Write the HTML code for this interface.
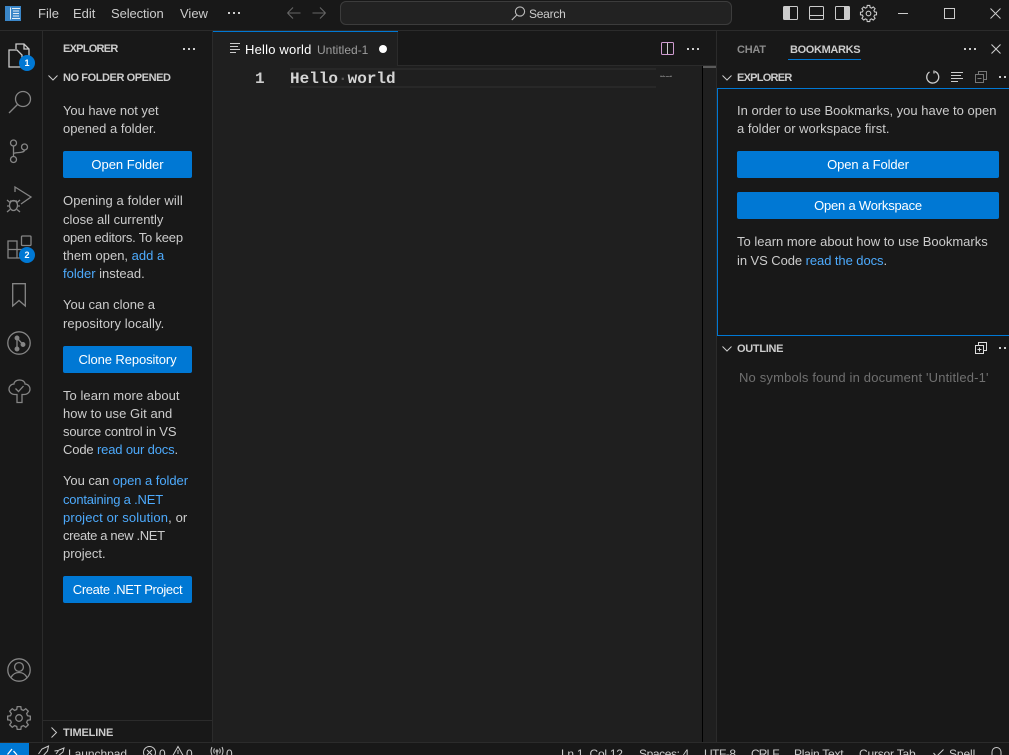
<!DOCTYPE html>
<html><head><meta charset="utf-8">
<style>
html,body{margin:0;padding:0;width:1009px;height:755px;overflow:hidden;background:#181818}
body{position:relative;font:13px "Liberation Sans",sans-serif;color:#ccc}
.r{position:absolute}
.t{position:absolute;white-space:nowrap;line-height:18px}
.h{font-size:11px;font-weight:bold;color:#ccc}
.b{position:absolute;background:#0078d4;color:#fff;text-align:center;height:27px;line-height:27px;border-radius:2px;white-space:nowrap}
a{color:#4daafc;text-decoration:none}
svg{position:absolute;overflow:visible;fill:none}
.s{font-size:12px;color:#ccc;top:745px}
.badge{position:absolute;width:16px;height:16px;border-radius:8px;background:#0078d4;color:#fff;font-size:9px;font-weight:bold;line-height:16px;text-align:center}
.dots{position:absolute;display:flex;gap:3px}
.dots i{display:block;width:2px;height:2px;background:#ccc}
</style></head><body>
<!-- structure -->
<div class="r" style="left:0;top:30px;width:1009px;height:1px;background:#2b2b2b"></div>
<div class="r" style="left:42px;top:31px;width:1px;height:712px;background:#2b2b2b"></div>
<div class="r" style="left:212px;top:31px;width:1px;height:712px;background:#2b2b2b"></div>
<div class="r" style="left:213px;top:31px;width:503px;height:712px;background:#1f1f1f"></div>
<div class="r" style="left:213px;top:31px;width:503px;height:35px;background:#181818"></div>
<div class="r" style="left:213px;top:65px;width:503px;height:1px;background:#2b2b2b"></div>
<div class="r" style="left:213px;top:31px;width:185px;height:35px;background:#1f1f1f"></div>
<div class="r" style="left:213px;top:31px;width:185px;height:1px;background:#0078d4"></div>
<div class="r" style="left:397px;top:32px;width:1px;height:34px;background:#2b2b2b"></div>
<div class="r" style="left:716px;top:31px;width:1px;height:712px;background:#2b2b2b"></div>
<div class="r" style="left:717px;top:31px;width:292px;height:712px;background:#181818"></div>
<div class="r" style="left:0;top:742px;width:1009px;height:1px;background:#2b2b2b"></div>
<div class="r" style="left:0;top:743px;width:1009px;height:12px;background:#181818"></div>
<div class="r" style="left:43px;top:720px;width:169px;height:1px;background:#2b2b2b"></div>
<!-- current line and editor scrollbar -->
<div class="r" style="left:290px;top:68px;width:366px;height:20px;box-sizing:border-box;border:solid #282828;border-width:2px 0;"></div>
<div class="r" style="left:702px;top:66px;width:1px;height:676px;background:#000"></div>
<div class="r" style="left:703px;top:66px;width:13px;height:2px;background:#5a5a5a"></div>

<!-- title bar -->
<div class="r" style="left:5px;top:6px;width:16px;height:15px;background:#3a86c8"></div>
<svg style="left:5px;top:6px" width="16" height="15" stroke="#e4eef6" stroke-width="1"><path d="M5.5 1.5V13.5M7 2.5H15M8 5H14M8 7.5H14M8 10H14M7 12.5H15"/></svg>
<div class="t" style="left:38px;top:5px;color:#ccc">File</div>
<div class="t" style="left:73px;top:5px">Edit</div>
<div class="t" style="left:111px;top:5px;letter-spacing:-.1px">Selection</div>
<div class="t" style="left:180px;top:5px">View</div>
<div class="dots" style="left:228px;top:12px"><i></i><i></i><i></i></div>
<svg style="left:287px;top:6px" width="14" height="14" stroke="#666" stroke-width="1.1"><path d="M.5 7H13.500M.5 7L6 1.500M.5 7L6 12.500"/></svg>
<svg style="left:312px;top:6px" width="14" height="14" stroke="#666" stroke-width="1.1"><path d="M.5 7H13.500M13.500 7L8 1.500M13.500 7L8 12.500"/></svg>
<div class="r" style="left:340px;top:1px;width:390px;height:22px;box-sizing:content-box;border:1px solid #3c3c3c;border-radius:6px;background:#222"></div>
<svg style="left:511px;top:6px" width="15" height="15" stroke="#bbb" stroke-width="1.1"><circle cx="9" cy="5.500" r="4.600"/><path d="M5.800 9L.8 14"/></svg>
<div class="t" style="left:529px;top:5px;font-size:12px;color:#ccc;letter-spacing:-.25px">Search</div>
<svg style="left:782px;top:5px" width="16" height="16" stroke="#ccc"><rect x="1.5" y="1.5" width="14" height="13" rx="1"/><rect x="2" y="2" width="6" height="12" fill="#ccc" stroke="none"/></svg>
<svg style="left:808px;top:5px" width="16" height="16" stroke="#ccc"><rect x="1.5" y="1.5" width="14" height="13" rx="1"/><path d="M2 10.5H15"/></svg>
<svg style="left:834px;top:5px" width="16" height="16" stroke="#ccc"><rect x="1.5" y="1.5" width="14" height="13" rx="1"/><rect x="10" y="2" width="5" height="12" fill="#ccc" stroke="none"/></svg>
<svg style="left:860px;top:5px" width="17" height="17" stroke="#ccc" stroke-width="1.500" viewBox="0 0 24 24"><circle cx="12" cy="12" r="3.300"/><path transform="translate(12 12)" d="M-2.280-8.500L-1.800-11.360H1.800L2.280-8.500 4.400-7.620 6.760-9.300 9.300-6.760 7.620-4.400 8.500-2.280 11.360-1.800V1.800L8.500 2.280 7.620 4.400 9.300 6.760 6.760 9.300 4.400 7.620 2.280 8.500 1.800 11.360H-1.800L-2.280 8.500-4.400 7.620-6.760 9.300-9.300 6.760-7.620 4.400-8.500 2.280-11.360 1.800V-1.800L-8.500-2.280-7.620-4.400-9.300-6.760-6.760-9.300-4.400-7.620Z"/></svg>
<div class="r" style="left:898px;top:13px;width:10px;height:1px;background:#ccc"></div>
<div class="r" style="left:944px;top:8px;width:9px;height:9px;border:1px solid #ccc"></div>
<svg style="left:990px;top:8px" width="11" height="11" stroke="#ccc"><path d="M.5 .5L10.5 10.5M10.5 .5L.5 10.5"/></svg>

<!-- activity bar -->
<svg style="left:8px;top:43px" width="24" height="24" stroke="#ccc" stroke-width="1.3"><path d="M8 6V1H16L21 6V17H14M16 1V6H21"/><path d="M1 7H9L14 12V24H1Z"/></svg>
<div class="badge" style="left:19px;top:55px">1</div>
<svg style="left:8px;top:90px" width="24" height="26" stroke="#858585" stroke-width="1.3"><circle cx="15" cy="9" r="7.5"/><path d="M9.5 14.5L1 23"/></svg>
<svg style="left:8px;top:138px" width="24" height="26" stroke="#858585" stroke-width="1.3"><circle cx="5.500" cy="5" r="3"/><circle cx="5.500" cy="21.500" r="3"/><circle cx="16.500" cy="9" r="3"/><path d="M5.500 8V18.500M16.500 12C16.500 15.500 8 14 5.500 15.500"/></svg>
<svg style="left:6px;top:186px" width="26" height="28" stroke="#858585" stroke-width="1.3"><path d="M9 6L9 1 25 11 15 18"/><ellipse cx="7.500" cy="19.500" rx="4" ry="5"/><path d="M1 14L4 16.500M14 14L11 16.500M1 20H3.500M11.500 20H14M1 26L4 23.500M14 26L11 23.500M4 15H11"/></svg>
<svg style="left:7px;top:235px" width="26" height="26" stroke="#858585" stroke-width="1.3"><rect x="14.5" y="1" width="9.5" height="9.5" rx="1"/><path d="M1 6H10V23H1ZM1 14.5H18V23H10M10 6V14.500"/></svg>
<div class="badge" style="left:19px;top:247px">2</div>
<svg style="left:12px;top:283px" width="14" height="24" stroke="#858585" stroke-width="1.3"><path d="M.7 .7H13.300V23L7 17.500 .7 23Z"/></svg>
<svg style="left:7px;top:331px" width="24" height="24" stroke="#858585" stroke-width="1.3"><circle cx="12" cy="12" r="11.2"/><circle cx="10" cy="7" r="1.8" fill="#858585"/><circle cx="10" cy="18" r="1.8" fill="#858585"/><circle cx="16" cy="13.5" r="1.8" fill="#858585"/><path d="M10 7V18M10 7L16 13.5"/></svg>
<svg style="left:8px;top:379px" width="23" height="25" stroke="#858585" stroke-width="1.3"><path d="M11.5 1C8 1 6 3 6 5 3 5 1 7.5 1 10 1 13.5 4 15.5 7 15.5H9V23.5H14V15.5H16C19 15.5 22 13.5 22 10 22 7.5 20 5 17 5 17 3 15 1 11.5 1Z"/><path d="M7.5 9.5L10.5 12.5 15.5 7"/></svg>
<svg style="left:7px;top:658px" width="24" height="24" stroke="#858585" stroke-width="1.3"><circle cx="12" cy="12" r="11.2"/><circle cx="12" cy="9" r="4.4"/><path d="M4 19.5C6 15.5 9 14.5 12 14.5S18 15.5 20 19.5"/></svg>
<svg style="left:7px;top:706px" width="24" height="24" stroke="#858585" stroke-width="1.3"><circle cx="12" cy="12" r="3.300"/><path transform="translate(12 12)" d="M-2.280-8.500L-1.800-11.360H1.800L2.280-8.500 4.400-7.620 6.760-9.300 9.300-6.760 7.620-4.400 8.500-2.280 11.360-1.800V1.800L8.500 2.280 7.620 4.400 9.300 6.760 6.760 9.300 4.400 7.620 2.280 8.500 1.800 11.360H-1.800L-2.280 8.500-4.400 7.620-6.760 9.300-9.300 6.760-7.620 4.400-8.500 2.280-11.360 1.800V-1.800L-8.500-2.280-7.620-4.400-9.300-6.760-6.760-9.300-4.400-7.620Z"/></svg>

<!-- left sidebar -->
<div class="t h" style="left:63px;top:40px;letter-spacing:-.75px">EXPLORER</div>
<div class="dots" style="left:183px;top:48px"><i></i><i></i><i></i></div>
<svg style="left:48px;top:74px" width="10" height="8" stroke="#ccc"><path d="M.5 1.5L5 6 9.500 1.500"/></svg>
<div class="t h" style="left:63px;top:69px;letter-spacing:-.42px">NO FOLDER OPENED</div>
<div class="t" style="left:63px;top:102px;letter-spacing:-.05px">You have not yet</div>
<div class="t" style="left:63px;top:120px">opened a folder.</div>
<div class="b" style="left:63px;top:151px;width:129px">Open Folder</div>
<div class="t" style="left:63px;top:192px;letter-spacing:.1px">Opening a folder will</div>
<div class="t" style="left:63px;top:211px">close all currently</div>
<div class="t" style="left:63px;top:229px;letter-spacing:-.2px">open editors. To keep</div>
<div class="t" style="left:63px;top:247px">them open, <a>add a</a></div>
<div class="t" style="left:63px;top:265px"><a>folder</a> instead.</div>
<div class="t" style="left:63px;top:296px">You can clone a</div>
<div class="t" style="left:63px;top:315px;letter-spacing:.1px">repository locally.</div>
<div class="b" style="left:63px;top:346px;width:129px;letter-spacing:-.1px">Clone Repository</div>
<div class="t" style="left:63px;top:387px;letter-spacing:.05px">To learn more about</div>
<div class="t" style="left:63px;top:405px;letter-spacing:.05px">how to use Git and</div>
<div class="t" style="left:63px;top:423px;letter-spacing:-.15px">source control in VS</div>
<div class="t" style="left:63px;top:441px;letter-spacing:-.15px">Code <a>read our docs</a>.</div>
<div class="t" style="left:63px;top:472px;letter-spacing:-.05px">You can <a>open a folder</a></div>
<div class="t" style="left:63px;top:491px;letter-spacing:-.2px"><a>containing a .NET</a></div>
<div class="t" style="left:63px;top:509px;letter-spacing:.13px"><a>project or solution</a>, or</div>
<div class="t" style="left:63px;top:527px;letter-spacing:-.35px">create a new .NET</div>
<div class="t" style="left:63px;top:545px">project.</div>
<div class="b" style="left:63px;top:576px;width:129px;letter-spacing:-.35px">Create .NET Project</div>
<svg style="left:50px;top:727px" width="8" height="11" stroke="#ccc"><path d="M1.500 .5L6.500 5.500 1.500 10.500"/></svg>
<div class="t h" style="left:63px;top:724px;letter-spacing:-.15px">TIMELINE</div>

<!-- tab -->
<svg style="left:230px;top:43px" width="12" height="12" stroke="#ccc"><path d="M0 .5H10M0 3.500H8M0 6.500H10M0 9.500H6"/></svg>
<div class="t" style="left:245px;top:41px;color:#fff;letter-spacing:.2px">Hello world</div>
<div class="t" style="left:317px;top:41px;font-size:12px;color:#9d9d9d">Untitled-1</div>
<div class="r" style="left:379px;top:45px;width:8px;height:8px;border-radius:4px;background:#fff"></div>
<svg style="left:661px;top:42px" width="13" height="13" stroke="#ccc"><rect x=".5" y=".5" width="12" height="12" rx="1" stroke="#cf9bd0"/><path d="M6.500 1V12"/></svg>
<div class="dots" style="left:687px;top:48px"><i></i><i></i><i></i></div>

<!-- editor -->
<div class="t" style="left:255px;top:70px;font:bold 16px/18px 'Liberation Mono','DejaVu Sans Mono',monospace;color:#ccc">1</div>
<div class="t" style="left:290px;top:70px;font:bold 16px/18px 'Liberation Mono','DejaVu Sans Mono',monospace;color:#d4d4d4">Hello<span style="color:#555">·</span>world</div>
<div class="t" style="left:660px;top:75px;font-size:2.200px;font-weight:bold;line-height:4px;color:#aaa">Hello world</div>

<!-- right panel -->
<div class="t h" style="left:737px;top:41px;color:#8c8c8c;letter-spacing:-.25px">CHAT</div>
<div class="t h" style="left:790px;top:41px;letter-spacing:-.35px">BOOKMARKS</div>
<div class="r" style="left:788px;top:59px;width:73px;height:1px;background:#0078d4"></div>
<div class="dots" style="left:964px;top:48px"><i></i><i></i><i></i></div>
<svg style="left:991px;top:44px" width="10" height="10" stroke="#ccc" stroke-width="1.1"><path d="M.5 .5L9.500 9.500M9.500 .5L.5 9.500"/></svg>
<svg style="left:722px;top:74px" width="10" height="8" stroke="#ccc"><path d="M.5 1.500L5 6 9.500 1.500"/></svg>
<div class="t h" style="left:737px;top:69px;letter-spacing:-.75px">EXPLORER</div>
<svg style="left:926px;top:70px" width="14" height="14" stroke="#ccc" stroke-width="1.3"><path d="M9 1.500A6 6 0 1 1 3.500 2M8 .5V3.500"/></svg>
<svg style="left:951px;top:72px" width="13" height="10" stroke="#ccc"><path d="M0 .5H12M0 3.500H10M0 6.500H12M0 9.500H7"/></svg>
<svg style="left:975px;top:71px" width="12" height="12" stroke="#777"><path d="M3.500 3V.5H11.500V8.500H9"/><rect x=".5" y="3.500" width="8" height="8"/><path d="M2.500 7.500H6.500"/></svg>
<div class="dots" style="left:999px;top:76px"><i></i><i></i><i></i></div>
<div class="r" style="left:717px;top:88px;width:292px;height:248px;box-sizing:border-box;border:1px solid #0078d4;border-right:0;"></div>
<div class="t" style="left:737px;top:102px">In order to use Bookmarks, you have to open</div>
<div class="t" style="left:737px;top:120px">a folder or workspace first.</div>
<div class="b" style="left:737px;top:151px;width:262px;letter-spacing:-.1px">Open a Folder</div>
<div class="b" style="left:737px;top:192px;width:262px;letter-spacing:-.2px">Open a Workspace</div>
<div class="t" style="left:737px;top:233px">To learn more about how to use Bookmarks</div>
<div class="t" style="left:737px;top:252px;letter-spacing:-.07px">in VS Code <a>read the docs</a>.</div>
<svg style="left:722px;top:345px" width="10" height="8" stroke="#ccc"><path d="M.5 1.500L5 6 9.500 1.500"/></svg>
<div class="t h" style="left:737px;top:340px;letter-spacing:-.3px">OUTLINE</div>
<svg style="left:975px;top:342px" width="12" height="12" stroke="#ddd"><path d="M3.500 3V.5H11.500V8.500H9"/><rect x=".5" y="3.500" width="8" height="8"/><path d="M2.500 7.500H6.500M4.500 5.500V9.500"/></svg>
<div class="dots" style="left:999px;top:347px"><i></i><i></i><i></i></div>
<div class="t" style="left:739px;top:369px;color:#707070;letter-spacing:.17px">No symbols found in document 'Untitled-1'</div>

<!-- status bar -->
<div class="r" style="left:0;top:743px;width:29px;height:12px;background:#0078d4"></div>
<svg style="left:6px;top:748px" width="12" height="7" stroke="#fff" stroke-width="1.300"><path d="M6 1L1.500 6.500M7.500 3L11 7"/></svg>
<svg style="left:37px;top:745px" width="28" height="12" stroke="#ccc"><path d="M1.500 9L5 4 11.500 1 10.500 6 6 11M19 9L22 5 27 3 26 7 21 11M21 5.500L17.500 6"/></svg>
<div class="t s" style="left:68px;letter-spacing:-.05px">Launchpad</div>
<svg style="left:143px;top:746px" width="13" height="13" stroke="#ccc"><circle cx="6.500" cy="6.500" r="6"/><path d="M4 4L9 9M9 4L4 9"/></svg>
<div class="t s" style="left:159px">0</div>
<svg style="left:171px;top:746px" width="14" height="12" stroke="#ccc"><path d="M7 .5L13.500 12H.5Z"/><path d="M7 4V8"/></svg>
<div class="t s" style="left:186px">0</div>
<svg style="left:210px;top:746px" width="14" height="12" stroke="#ccc"><circle cx="7" cy="5" r="1"/><path d="M7 6V12M4.500 2.500Q3 5 4.500 7.500M9.500 2.500Q11 5 9.500 7.500M2 1Q0 5 2 9M12 1Q14 5 12 9"/></svg>
<div class="t s" style="left:226px">0</div>
<div class="t s" style="left:561px;letter-spacing:-.25px">Ln 1, Col 12</div>
<div class="t s" style="left:639px;letter-spacing:-.4px">Spaces: 4</div>
<div class="t s" style="left:704px;letter-spacing:-.5px">UTF-8</div>
<div class="t s" style="left:751px;letter-spacing:-.9px">CRLF</div>
<div class="t s" style="left:794px;letter-spacing:-.25px">Plain Text</div>
<div class="t s" style="left:859px;letter-spacing:-.2px">Cursor Tab</div>
<svg style="left:933px;top:749px" width="11" height="8" stroke="#ccc"><path d="M.5 4L3.500 7.500 10.500 .5"/></svg>
<div class="t s" style="left:949px;letter-spacing:-.1px">Spell</div>
<svg style="left:991px;top:747px" width="11" height="10" stroke="#ccc"><path d="M1 10V5A4.500 4.500 0 0 1 10 5V10"/></svg>
</body></html>
